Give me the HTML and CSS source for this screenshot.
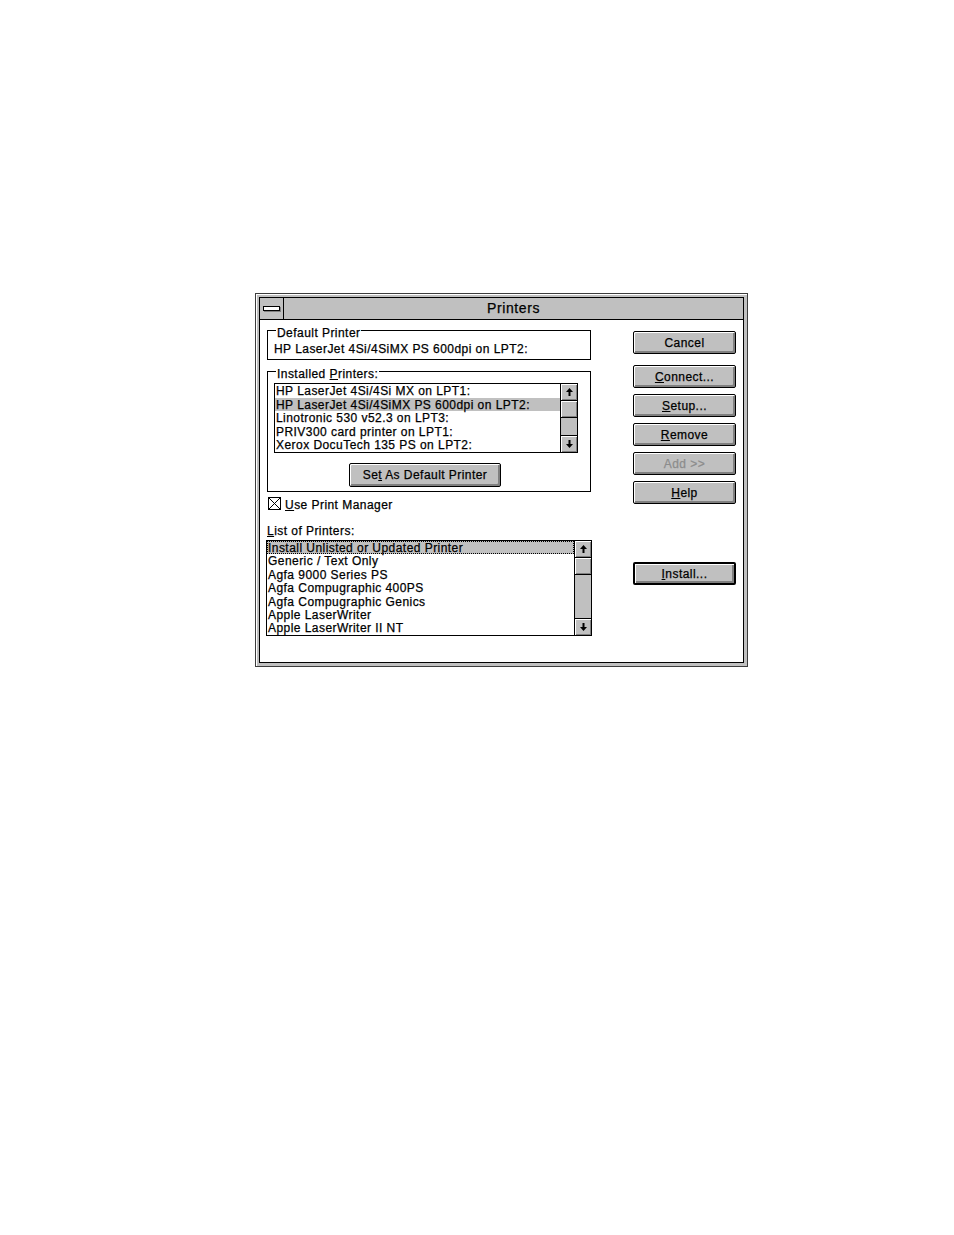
FILE: index.html
```html
<!DOCTYPE html>
<html>
<head>
<meta charset="utf-8">
<title>Printers</title>
<link rel="stylesheet" href="styles.css">
</head>
<body>
<div class="window">
  <div class="frame">
    <div class="titlebar">
      <div class="sysmenu"><span class="sysbar"></span></div>
      <div class="title">Printers</div>
    </div>
    <div class="body">
      <div class="leftcol">
        <div class="group group-default">
          <span class="legend">Default Printer</span>
          <div class="default-text">HP LaserJet 4Si/4SiMX PS 600dpi on LPT2:</div>
        </div>
        <div class="group group-installed">
          <span class="legend">Installed <u>P</u>rinters:</span>
          <div class="listbox lb1">
            <div class="items">
              <div class="row">HP LaserJet 4Si/4Si MX on LPT1:</div>
              <div class="row sel">HP LaserJet 4Si/4SiMX PS 600dpi on LPT2:</div>
              <div class="row">Linotronic 530 v52.3 on LPT3:</div>
              <div class="row">PRIV300 card printer on LPT1:</div>
              <div class="row">Xerox DocuTech 135 PS on LPT2:</div>
            </div>
            <div class="scrollbar">
              <div class="sb-btn sb-up"><svg width="7" height="8" viewBox="0 0 7 8"><path d="M3.5 0 L7 4 H4.5 V8 H2.5 V4 H0 Z" fill="#000"/></svg></div>
              <div class="sb-thumb"></div>
              <div class="sb-track"></div>
              <div class="sb-btn sb-down"><svg width="7" height="8" viewBox="0 0 7 8"><path d="M3.5 8 L7 4 H4.5 V0 H2.5 V4 H0 Z" fill="#000"/></svg></div>
            </div>
          </div>
          <button class="btn btn-setdefault">Se<u>t</u> As Default Printer</button>
        </div>
        <div class="check-row">
          <svg class="checkbox" width="13" height="13" viewBox="0 0 13 13"><rect x="0.5" y="0.5" width="12" height="12" fill="#fff" stroke="#000"/><path d="M1 1 L12 12 M12 1 L1 12" stroke="#000" stroke-width="1"/></svg>
          <span class="check-label"><u>U</u>se Print Manager</span>
        </div>
        <div class="list-label"><u>L</u>ist of Printers:</div>
        <div class="listbox lb2">
          <div class="items">
            <div class="row sel focus">Install Unlisted or Updated Printer</div>
            <div class="row">Generic / Text Only</div>
            <div class="row">Agfa 9000 Series PS</div>
            <div class="row">Agfa Compugraphic 400PS</div>
            <div class="row">Agfa Compugraphic Genics</div>
            <div class="row">Apple LaserWriter</div>
            <div class="row">Apple LaserWriter II NT</div>
          </div>
          <div class="scrollbar">
            <div class="sb-btn sb-up"><svg width="7" height="8" viewBox="0 0 7 8"><path d="M3.5 0 L7 4 H4.5 V8 H2.5 V4 H0 Z" fill="#000"/></svg></div>
            <div class="sb-thumb"></div>
            <div class="sb-track"></div>
            <div class="sb-btn sb-down"><svg width="7" height="8" viewBox="0 0 7 8"><path d="M3.5 8 L7 4 H4.5 V0 H2.5 V4 H0 Z" fill="#000"/></svg></div>
          </div>
        </div>
      </div>
      <div class="rightcol">
        <button class="btn rbtn b-cancel">Cancel</button>
        <button class="btn rbtn b-connect"><u>C</u>onnect...</button>
        <button class="btn rbtn b-gap"><u>S</u>etup...</button>
        <button class="btn rbtn b-gap"><u>R</u>emove</button>
        <button class="btn rbtn b-gap disabled">Add &gt;&gt;</button>
        <button class="btn rbtn b-gap"><u>H</u>elp</button>
        <button class="btn rbtn b-install default"><u>I</u>nstall...</button>
      </div>
    </div>
  </div>
</div>
</body>
</html>
```

FILE: styles.css
```css
* { box-sizing: border-box; }

html, body {
  margin: 0;
  padding: 0;
  background: #fff;
}

body {
  font-family: "Liberation Sans", Arial, sans-serif;
  font-size: 12px;
  letter-spacing: 0.45px;
  color: #000;
  -webkit-text-stroke: 0.25px;
}

u { text-decoration: underline; text-underline-offset: 1px; }

.window {
  margin: 293px 0 0 255px;
  width: 493px;
  height: 374px;
  border: 1px solid #3c3c3c;
  background: #c0c0c0;
  padding: 3px;
  box-shadow: inset 1px 1px 0 #fff;
}

.frame {
  height: 100%;
  border: 1px solid #000;
  background: #fff;
  display: flex;
  flex-direction: column;
}

.titlebar {
  height: 22px;
  flex: none;
  display: flex;
  background: #c0c0c0;
  border-bottom: 1px solid #000;
}

.sysmenu {
  width: 24px;
  border-right: 1px solid #000;
  display: flex;
  align-items: center;
  justify-content: center;
}

.sysbar {
  width: 17px;
  height: 5px;
  border: 1px solid #000;
  background: #fff;
  box-shadow: 1px 1px 0 #808080;
}

.title {
  flex: 1;
  text-align: center;
  font-size: 14px;
  line-height: 21px;
  letter-spacing: 0.6px;
}

.body {
  flex: 1;
  display: flex;
  padding: 10px 0 0 6px;
}

.leftcol {
  width: 326px;
  display: flex;
  flex-direction: column;
}

.group {
  position: relative;
  margin-left: 1px;
  width: 324px;
  border: 1px solid #000;
}

.legend {
  position: absolute;
  top: -5px;
  left: 8px;
  padding: 0 1px;
  line-height: 14px;
  background: #fff;
}

.group-default {
  height: 30px;
  padding: 11px 0 0 6px;
}

.default-text { line-height: 14px; }

.group-installed {
  margin-top: 11px;
  height: 121px;
  padding: 11px 0 0 6px;
}

.listbox {
  display: flex;
  border: 1px solid #000;
  background: #fff;
}

.lb1 {
  width: 304px;
  height: 70px;
}

.items {
  flex: 1;
  overflow: hidden;
}

.row {
  padding-left: 1px;
  white-space: nowrap;
}

.lb1 .row { height: 13.6px; line-height: 15.6px; }

.row.sel { background: #c0c0c0; }

.row.focus { outline: 1px dotted #000; outline-offset: -1px; }

.scrollbar {
  width: 17px;
  flex: none;
  border-left: 1px solid #000;
  display: flex;
  flex-direction: column;
  background: #c0c0c0;
}

.sb-btn {
  height: 16px;
  flex: none;
  display: flex;
  align-items: center;
  justify-content: center;
  background: #c0c0c0;
  box-shadow: inset 1px 1px 0 #fff, inset -1px -1px 0 #808080;
}

.sb-up { border-bottom: 1px solid #000; height: 17px; }
.sb-down { border-top: 1px solid #000; height: 17px; }

.sb-thumb {
  height: 17px;
  flex: none;
  border-bottom: 1px solid #000;
  background: #c0c0c0;
  box-shadow: inset 1px 1px 0 #fff, inset -1px -1px 0 #808080;
}

.sb-track {
  flex: 1;
  background: #c0c0c0;
}

.btn {
  display: block;
  font-family: inherit;
  font-size: 12px;
  letter-spacing: 0.45px;
  -webkit-text-stroke: 0.25px;
  color: #000;
  background: #c0c0c0;
  border: 1px solid #000;
  border-radius: 2px;
  padding: 0;
  box-shadow: inset 1px 1px 0 #fff, inset -2px -2px 0 #808080;
  text-align: center;
}

.btn-setdefault {
  margin: 10px 0 0 75px;
  width: 152px;
  height: 24px;
  line-height: 22px;
}

.check-row {
  display: flex;
  align-items: center;
  gap: 4px;
  margin: 5px 0 0 2px;
  height: 13px;
  line-height: 14px;
}

.check-label { padding-top: 2px; }

.checkbox { flex: none; }

.list-label {
  margin: 14px 0 0 1px;
  line-height: 14px;
}

.lb2 {
  margin-top: 2px;
  width: 326px;
  height: 96px;
}

.lb2 .row { height: 13.4px; line-height: 15.4px; }

.rightcol {
  margin-left: 41px;
  display: flex;
  flex-direction: column;
}

.rbtn {
  width: 103px;
  height: 23px;
  line-height: 20px;
}

.b-cancel { margin-top: 1px; }
.b-connect { margin-top: 11px; }
.b-gap { margin-top: 6px; }
.b-install { margin-top: 58px; }

.btn.default { border-width: 2px; line-height: 18px; }

.btn.disabled { color: #8c8c8c; }
```
